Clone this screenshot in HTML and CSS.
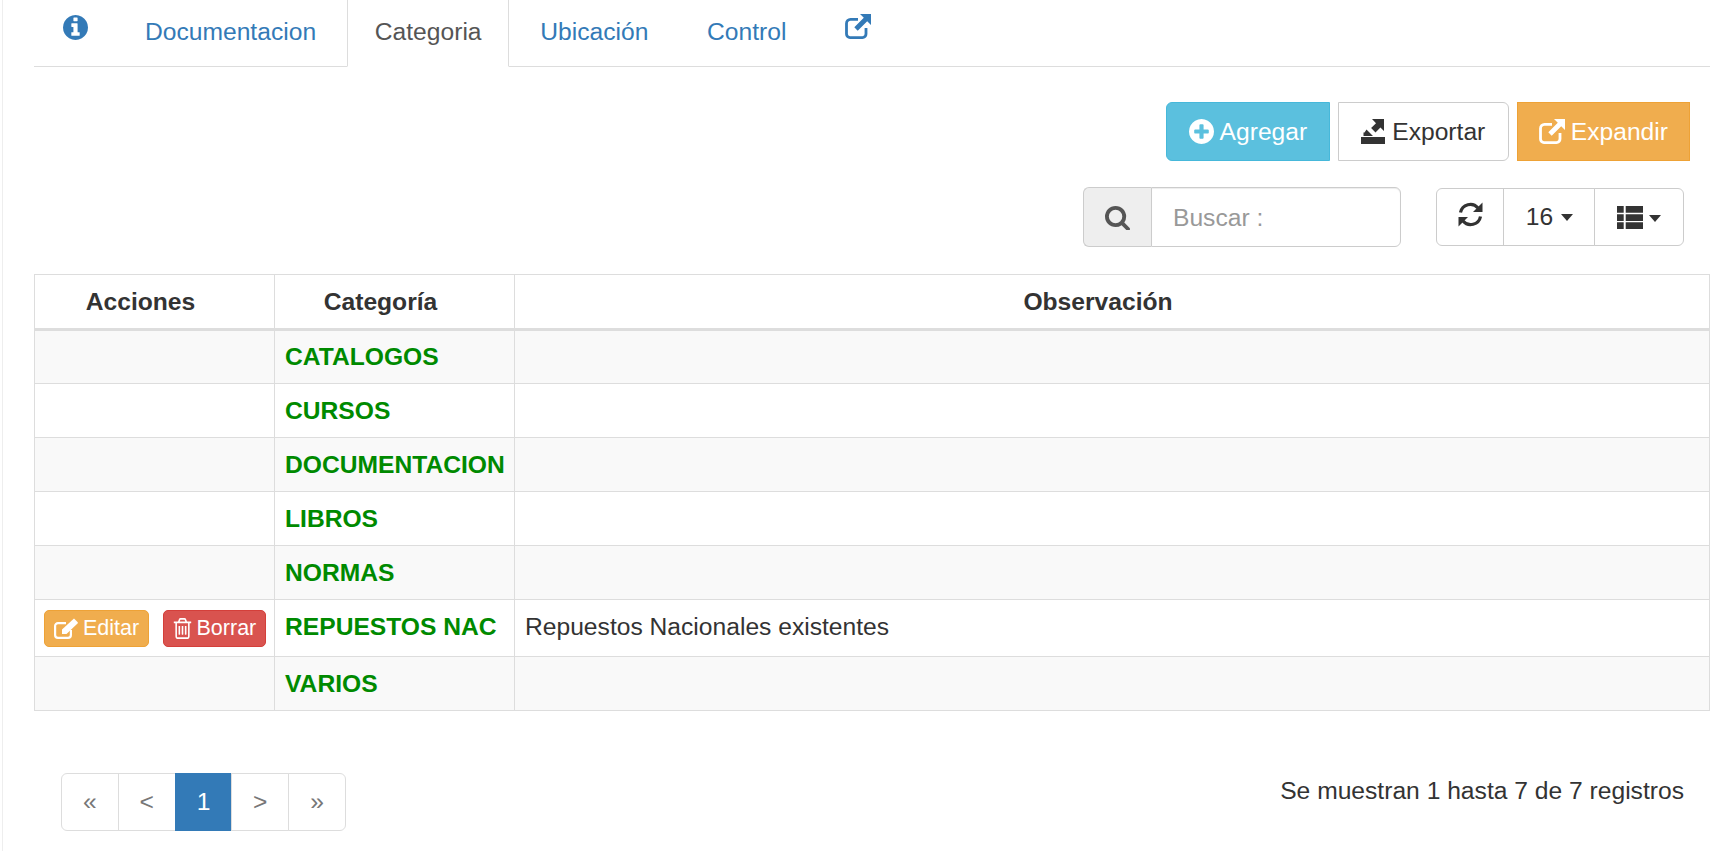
FILE: index.html
```html
<!DOCTYPE html>
<html lang="es">
<head>
<meta charset="utf-8">
<title>Categoria</title>
<link rel="stylesheet" href="styles.css">
</head>
<body>
<svg class="defs" width="0" height="0" aria-hidden="true">
  <defs>
    <g id="ext">
      <path fill="none" stroke="currentColor" stroke-width="2.8" d="M13 5.400H5.500a4 4 0 0 0-4 4v10.700a3.500 3.500 0 0 0 3.500 3.500h12.500a3.500 3.500 0 0 0 3.500-3.500V14"/>
      <path d="M15 0h11v11l-3.800-3.800-9.500 9.500-3.400-3.400 9.500-9.500z"/>
    </g>
  </defs>
</svg>
<div class="page">
  <ul class="tabs">
    <li class="tab tab-info"><a href="#"><svg class="ico-25" viewBox="128 128 1536 1536"><path d="M1152 1376v-160q0-14-9-23t-23-9h-96v-512q0-14-9-23t-23-9h-320q-14 0-23 9t-9 23v160q0 14 9 23t23 9h96v320h-96q-14 0-23 9t-9 23v160q0 14 9 23t23 9h448q14 0 23-9t9-23zm-128-896v-160q0-14-9-23t-23-9h-192q-14 0-23 9t-9 23v160q0 14 9 23t23 9h192q14 0 23-9t9-23zm640 416q0 209-103 385.500t-279.500 279.500-385.500 103-385.500-103-279.500-279.500-103-385.500 103-385.500 279.500-279.500 385.500-103 385.500 103 279.500 279.500 103 385.500z"/></svg></a></li>
    <li class="tab"><a href="#">Documentacion</a></li>
    <li class="tab active"><a href="#">Categoria</a></li>
    <li class="tab"><a href="#">Ubicación</a></li>
    <li class="tab"><a href="#">Control</a></li>
    <li class="tab tab-ext"><a href="#"><svg class="ico-ext" viewBox="0 0 26 25"><use href="#ext"/></svg></a></li>
  </ul>

  <div class="actions">
    <button class="btn btn-info"><svg class="ico-25" viewBox="128 128 1536 1536"><path d="M1344 960v-128q0-26-19-45t-45-19h-256v-256q0-26-19-45t-45-19h-128q-26 0-45 19t-19 45v256h-256q-26 0-45 19t-19 45v128q0 26 19 45t45 19h256v256q0 26 19 45t45 19h128q26 0 45-19t19-45v-256h256q26 0 45-19t19-45zm320-64q0 209-103 385.500t-279.500 279.500-385.500 103-385.500-103-279.500-279.500-103-385.500 103-385.500 279.500-279.500 385.500-103 385.500 103 279.500 279.500 103 385.500z"/></svg>Agregar</button>
    <button class="btn btn-default"><svg class="ico-export" viewBox="0 0 24 25"><path d="M11 0h12v12l-3.600-3.400-4.900 4.900-4.400-4.400 4.900-4.900z"/><path d="M5.500 10.500l6.500 6.500H2.500v-3.500h1zM0 18h24v7H0z"/></svg>Exportar</button>
    <button class="btn btn-warning"><svg class="ico-ext" viewBox="0 0 26 25"><use href="#ext"/></svg>Expandir</button>
  </div>

  <div class="toolbar">
    <div class="search">
      <span class="search-addon"><svg class="ico-25" viewBox="64 64 1664 1664"><path d="M1216 832q0-185-131.500-316.500t-316.500-131.500-316.500 131.500-131.500 316.500 131.500 316.500 316.500 131.500 316.500-131.500 131.500-316.500zm512 832q0 52-38 90t-90 38q-54 0-90-38l-343-342q-179 124-399 124-143 0-273.500-55.500t-225-150-150-225-55.500-273.500 55.500-273.500 150-225 225-150 273.500-55.500 273.500 55.500 225 150 150 225 55.500 273.500q0 220-124 399l343 343q37 37 37 90z"/></svg></span>
      <input class="search-input" type="text" placeholder="Buscar :">
    </div>
    <div class="group">
      <button class="group-btn gb-refresh"><svg class="ico-25" viewBox="0 0 25 25"><path fill="none" stroke="currentColor" stroke-width="3.200" d="M2.500 10.500A10 10 0 0 1 20 6"/><path d="M24.500.5V10H15z"/><path fill="none" stroke="currentColor" stroke-width="3.200" d="M22.500 14.500A10 10 0 0 1 5 19"/><path d="M.5 24.500V15H10z"/></svg></button>
      <button class="group-btn gb-num">16<span class="caret"></span></button>
      <button class="group-btn gb-list"><svg class="ico-list" viewBox="0 0 26 23"><path d="M0 0h6.700v6.700H0zM8.700 0H26v6.700H8.700zM0 8.200h6.700v6.700H0zM8.700 8.200H26v6.700H8.700zM0 16.300h6.700V23H0zM8.700 16.300H26V23H8.700z"/></svg><span class="caret"></span></button>
    </div>
  </div>

  <table class="grid">
    <thead>
      <tr><th class="col-a">Acciones</th><th class="col-b">Categoría</th><th>Observación</th></tr>
    </thead>
    <tbody>
      <tr class="odd"><td></td><td class="cat">CATALOGOS</td><td></td></tr>
      <tr><td></td><td class="cat">CURSOS</td><td></td></tr>
      <tr class="odd"><td></td><td class="cat">DOCUMENTACION</td><td></td></tr>
      <tr><td></td><td class="cat">LIBROS</td><td></td></tr>
      <tr class="odd"><td></td><td class="cat">NORMAS</td><td></td></tr>
      <tr class="with-actions">
        <td class="acts">
          <button class="mini mini-warn"><svg class="ico-edit" viewBox="0 0 24 21"><path fill="none" stroke="currentColor" stroke-width="2.200" d="M12 5.100H4A2.900 2.900 0 0 0 1.100 8v9A2.900 2.900 0 0 0 4 19.900h10a2.900 2.900 0 0 0 2.900-2.900v-5"/><path d="M20 .5l3.500 3.500a1 1 0 0 1 0 1.400L12.500 16H8v-4.500z"/></svg>Editar</button>
          <button class="mini mini-danger"><svg class="ico-trash" viewBox="128 128 1536 1536" preserveAspectRatio="none"><path d="M704 736v576q0 14-9 23t-23 9h-64q-14 0-23-9t-9-23v-576q0-14 9-23t23-9h64q14 0 23 9t9 23zm256 0v576q0 14-9 23t-23 9h-64q-14 0-23-9t-9-23v-576q0-14 9-23t23-9h64q14 0 23 9t9 23zm256 0v576q0 14-9 23t-23 9h-64q-14 0-23-9t-9-23v-576q0-14 9-23t23-9h64q14 0 23 9t9 23zm128 724v-948h-896v948q0 22 7 40.500t14.500 27 10.500 8.500h832q3 0 10.500-8.500t14.500-27 7-40.500zm-672-1076h448l-48-117q-7-9-17-11h-317q-10 2-17 11zm928 32v64q0 14-9 23t-23 9h-96v948q0 83-47 143.500t-113 60.500h-832q-66 0-113-58.500t-47-141.500v-952h-96q-14 0-23-9t-9-23v-64q0-14 9-23t23-9h309l70-167q15-37 54-63t79-26h320q40 0 79 26t54 63l70 167h309q14 0 23 9t9 23z"/></svg>Borrar</button>
        </td>
        <td class="cat">REPUESTOS NAC</td>
        <td>Repuestos Nacionales existentes</td>
      </tr>
      <tr class="odd"><td></td><td class="cat">VARIOS</td><td></td></tr>
    </tbody>
  </table>

  <div class="footer">
    <ul class="pager">
      <li><a href="#">«</a></li>
      <li><a href="#">&lt;</a></li>
      <li class="current"><a href="#">1</a></li>
      <li><a href="#">&gt;</a></li>
      <li><a href="#">»</a></li>
    </ul>
    <div class="summary">Se muestran 1 hasta 7 de 7 registros</div>
  </div>
</div>
</body>
</html>
```
FILE: styles.css
```css
* { box-sizing: border-box; }
html, body { margin: 0; height: 100%; overflow: hidden; background: #fff; }
body {
  font-family: "Liberation Sans", Arial, sans-serif;
  font-size: 24.64px;
  color: #333;
}
svg { fill: currentColor; flex: none; }
.page {
  height: 851px;
  margin-left: 2px;
  border-left: 1px solid #eee;
  padding: 0 16px 0 31px;
}
a { text-decoration: none; color: #337ab7; }
button { font-family: inherit; cursor: pointer; }
.defs { position: absolute; }

.tabs {
  list-style: none;
  display: flex;
  margin: 0;
  padding: 0;
  height: 67px;
  border-bottom: 1px solid #ddd;
}
.tab { height: 67px; margin-right: 3.500px; }
.tab a {
  display: block;
  height: 67px;
  padding: 18px 26.600px 0;
  line-height: 28px;
  border: 1px solid transparent;
  border-top: 0;
}
.tab.active a {
  color: #555;
  background: #fff;
  border-color: #ddd;
  border-bottom-color: #fff;
}
.tab-info a, .tab-ext a { line-height: 0; }
.tab-info a { padding: 15px 24.900px 0 28px; }
.tab-ext a { padding: 14px 26px 0; }
.ico-25 { width: 25px; height: 25px; }
.ico-ext { width: 26px; height: 25px; }
.ico-export { width: 24px; height: 25px; }

.actions {
  display: flex;
  justify-content: flex-end;
  gap: 8px;
  margin-top: 35px;
  padding-right: 20px;
}
.btn {
  height: 59px;
  padding: 0 21.500px;
  font-size: 24.64px;
  border: 1px solid transparent;
  display: flex;
  align-items: center;
  gap: 6px;
}
.btn-info { color: #fff; background: #5bc0de; border-color: #46b8da; border-radius: 6px 0 0 6px; }
.btn-default { padding: 0 22.500px; gap: 7px; color: #333; background: #fff; border-color: #ccc; border-radius: 0 6px 6px 0; }
.btn-warning { padding: 0 21px; color: #fff; background: #f0ad4e; border-color: #eea236; border-radius: 0; }

.toolbar {
  display: flex;
  justify-content: flex-end;
  align-items: center;
  gap: 35px;
  margin-top: 26px;
  padding-right: 26px;
}
.search { display: flex; height: 60px; width: 318px; }
.search-addon {
  width: 68px;
  display: flex;
  align-items: center;
  justify-content: center;
  background: #eee;
  border: 1px solid #ccc;
  border-right: 0;
  border-radius: 6px 0 0 6px;
  color: #555;
}
.search-input {
  flex: 1;
  min-width: 0;
  border: 1px solid #ccc;
  border-radius: 0 6px 6px 0;
  padding: 2px 21px 0;
  font: inherit;
  color: #555;
  box-shadow: inset 0 1px 1px rgba(0,0,0,.075);
}
.search-input::placeholder { color: #999; opacity: 1; }
.group { display: flex; height: 58px; }
.group-btn {
  display: flex;
  align-items: center;
  justify-content: center;
  height: 58px;
  font-size: 24.64px;
  color: #333;
  background: #fff;
  border: 1px solid #ccc;
  margin-left: -1px;
  padding: 0;
}
.gb-refresh { width: 68px; margin-left: 0; border-radius: 6px 0 0 6px; }
.gb-refresh svg { margin-top: -5px; }
.gb-num { width: 92px; padding-left: 1px; }
.gb-list { width: 90px; border-radius: 0 6px 6px 0; }
.ico-list { width: 26px; height: 23px; }
.caret {
  display: inline-block;
  margin-left: 8px;
  border-top: 7px solid #333;
  border-left: 6.500px solid transparent;
  border-right: 6.500px solid transparent;
}
.gb-list .caret { margin-left: 6px; margin-top: 2px; }

.grid {
  width: 1676px;
  margin-top: 27px;
  border-collapse: collapse;
  table-layout: fixed;
}
.grid th, .grid td {
  border: 1px solid #ddd;
  padding: 0 10px;
  height: 54px;
  vertical-align: middle;
}
.grid th {
  height: 55px;
  padding-right: 38px;
  text-align: center;
  font-weight: bold;
  border-bottom: 3px solid #ddd;
}
.col-a, .col-b { width: 240px; }
.odd td { background: #f9f9f9; }
.cat { color: #008a00; font-weight: bold; white-space: nowrap; }
.with-actions td { height: 57px; padding-bottom: 3px; }
.grid .acts { white-space: nowrap; padding: 1px 0 0 9px; }
.mini {
  display: inline-flex;
  align-items: center;
  gap: 5px;
  height: 37px;
  padding: 0 9px;
  font-size: 21.500px;
  color: #fff;
  border: 1px solid transparent;
  border-radius: 5px;
  vertical-align: middle;
}
.mini + .mini { margin-left: 6.500px; }
.mini-warn { background: #f0ad4e; border-color: #eea236; }
.mini-danger { background: #d9534f; border-color: #d43f3a; }
.ico-edit { width: 24px; height: 21px; }
.ico-trash { width: 19px; height: 21px; }

.footer {
  display: flex;
  justify-content: space-between;
  align-items: flex-start;
  margin-top: 62px;
  padding: 0 26px 0 28px;
}
.pager {
  list-style: none;
  display: flex;
  margin: 0;
  padding: 0;
}
.pager li { margin-left: -1px; }
.pager a {
  display: flex;
  align-items: center;
  justify-content: center;
  width: 57.800px;
  height: 58px;
  color: #777;
  background: #fff;
  border: 1px solid #ddd;
}
.pager li:first-child a { border-radius: 6px 0 0 6px; }
.pager li:last-child a { border-radius: 0 6px 6px 0; }
.pager .current a { color: #fff; background: #337ab7; border-color: #337ab7; }
.summary { padding-top: 4px; line-height: 28px; }
```
